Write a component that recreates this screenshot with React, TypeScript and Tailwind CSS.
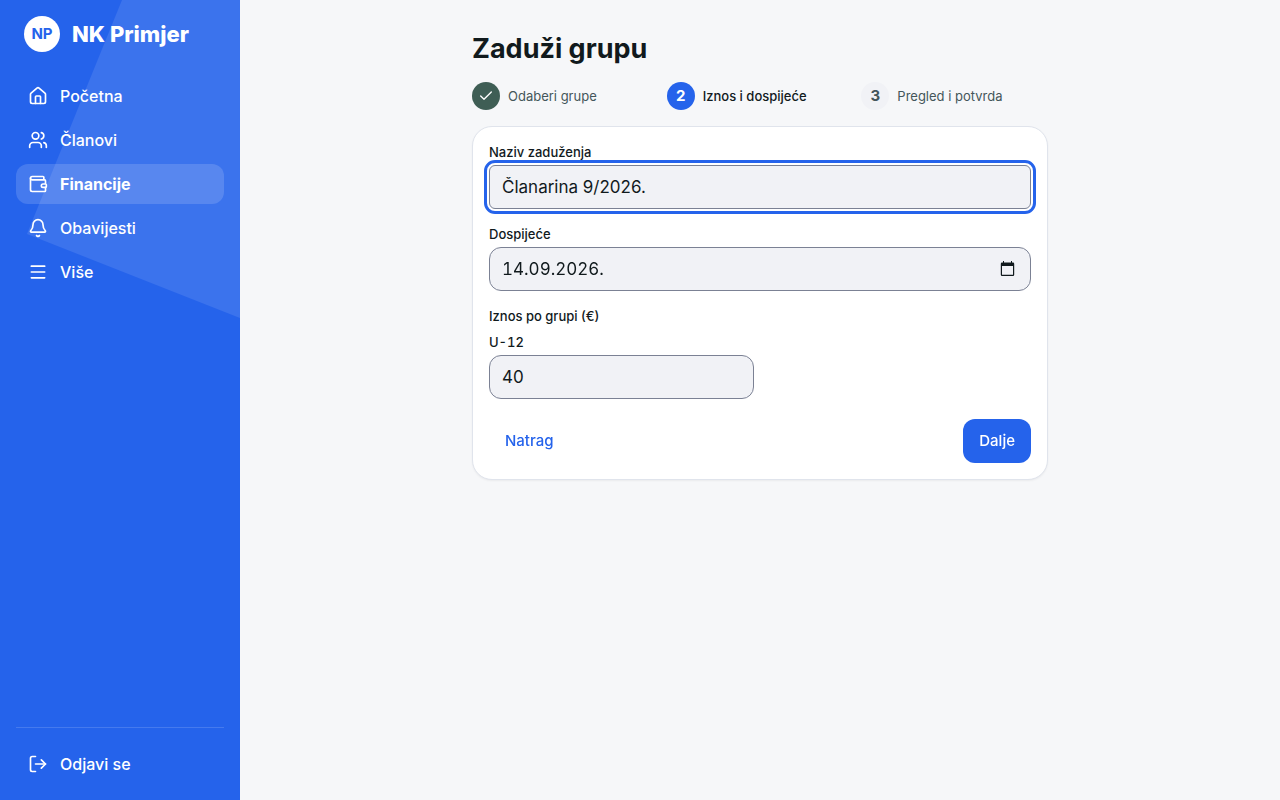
import React, { useState } from 'react'
import { Bell, Check, House, LogOut, Menu, Users, Wallet } from 'lucide-react'
import clsx from 'clsx'

const NAV = [
  { label: 'Početna', icon: House },
  { label: 'Članovi', icon: Users },
  { label: 'Financije', icon: Wallet },
  { label: 'Obavijesti', icon: Bell },
  { label: 'Više', icon: Menu },
]

const STEPS = ['Odaberi grupe', 'Iznos i dospijeće', 'Pregled i potvrda']
const CURRENT_STEP = 1

const inputClass =
  'block h-11 w-full rounded-xl border border-[#7b8194] bg-[#f1f2f6] px-3 text-[17px] text-[#111a1d] focus:rounded-md focus:outline-3 focus:outline-offset-2 focus:outline-[#2563eb]'
const labelClass = 'block text-[13px] leading-[18px] font-medium'

function Sidebar() {
  const [active, setActive] = useState('Financije')

  return (
    <aside className="relative flex w-60 shrink-0 flex-col overflow-hidden bg-[#2563eb] p-4 text-white">
      <div
        aria-hidden="true"
        className="absolute top-0 right-0 h-[318px] w-[213px] bg-white/10 [clip-path:polygon(95px_0,100%_0,100%_100%,0_234px)]"
      />
      <div className="relative flex items-center gap-3 px-2">
        <span className="flex size-9 items-center justify-center rounded-full bg-white text-[15px] font-bold text-[#2563eb]">NP</span>
        <span className="text-[22px] leading-8 font-extrabold">NK Primjer</span>
      </div>
      <nav className="relative mt-6 flex flex-col gap-1">
        {NAV.map(({ label, icon: Icon }) => (
          <a
            key={label}
            href="#"
            aria-current={active === label ? 'page' : undefined}
            onClick={() => setActive(label)}
            className={clsx(
              'flex h-10 items-center gap-3 rounded-xl px-3 text-base',
              active === label ? 'bg-white/15 font-bold' : 'font-medium',
            )}
          >
            <Icon size={20} />
            {label}
          </a>
        ))}
      </nav>
      <div className="relative mt-auto border-t border-white/15 pt-4">
        <button type="button" className="flex h-10 w-full items-center gap-3 rounded-xl px-3 text-base font-medium">
          <LogOut size={20} />
          Odjavi se
        </button>
      </div>
    </aside>
  )
}

function Stepper() {
  return (
    <ol className="mt-4 grid grid-cols-3 gap-2">
      {STEPS.map((step, i) => (
        <li key={step} className="flex items-center gap-2" aria-current={i === CURRENT_STEP ? 'step' : undefined}>
          <span
            className={clsx(
              'flex size-7 shrink-0 items-center justify-center rounded-full text-[15px] font-bold',
              i < CURRENT_STEP && 'bg-[#3f5e55] text-white',
              i === CURRENT_STEP && 'bg-[#2563eb] text-white',
              i > CURRENT_STEP && 'bg-[#f1f2f6] text-[#44565a]',
            )}
          >
            {i < CURRENT_STEP ? <Check size={16} /> : i + 1}
          </span>
          <span className={clsx('text-[13px] leading-[18px]', i === CURRENT_STEP ? 'font-medium' : 'text-[#44565a]')}>{step}</span>
        </li>
      ))}
    </ol>
  )
}

export default function App() {
  const [name, setName] = useState('Članarina 9/2026.')
  const [dueDate, setDueDate] = useState('14.09.2026.')
  const [amount, setAmount] = useState('40')

  return (
    <div className="flex min-h-screen bg-[#f6f7f9] font-['Inter',sans-serif] text-[#111a1d]">
      <Sidebar />
      <main className="min-w-0 flex-1 py-8">
        <div className="mx-auto max-w-xl">
          <h1 className="text-[27px] leading-[34px] font-bold">Zaduži grupu</h1>
          <Stepper />
          <form
            onSubmit={(e) => e.preventDefault()}
            className="mt-4 rounded-[20px] border border-[#e0e4ec] bg-white p-4 shadow-xs"
          >
            <div className="space-y-4">
              <div className="space-y-1">
                <label htmlFor="name" className={labelClass}>Naziv zaduženja</label>
                <input
                  id="name"
                  autoFocus
                  value={name}
                  onChange={(e) => setName(e.target.value)}
                  className={inputClass}
                />
              </div>
              <div className="space-y-1">
                <label htmlFor="due" className={labelClass}>Dospijeće</label>
                <div className="relative">
                  <input
                    id="due"
                    inputMode="numeric"
                    value={dueDate}
                    onChange={(e) => setDueDate(e.target.value)}
                    className={clsx(inputClass, 'tabular-nums')}
                  />
                  <button type="button" aria-label="Otvori kalendar" className="absolute inset-y-0 right-4 flex items-center">
                    <svg width="15" height="17" viewBox="0 0 15 17" fill="currentColor" aria-hidden="true">
                      <path d="M3 0h1v1.500h7V0h1v1.500h1A1.200 1.200 0 0 1 14.200 2.700v11.100A1.200 1.200 0 0 1 13 15H2a1.200 1.200 0 0 1-1.200-1.200V2.700A1.200 1.200 0 0 1 2 1.500h1zM2 5v8.800h11V5z" />
                    </svg>
                  </button>
                </div>
              </div>
              <fieldset>
                <legend className={labelClass}>Iznos po grupi (€)</legend>
                <div className="mt-2 grid grid-cols-2 gap-3">
                  <div className="space-y-1">
                    <label htmlFor="amount-u12" className={clsx(labelClass, 'tabular-nums')}>U-12</label>
                    <input
                      id="amount-u12"
                      inputMode="decimal"
                      value={amount}
                      onChange={(e) => setAmount(e.target.value)}
                      className={inputClass}
                    />
                  </div>
                </div>
              </fieldset>
            </div>
            <div className="mt-5 flex justify-between">
              <button type="button" className="h-11 rounded-xl px-4 text-[15px] font-medium text-[#2563eb]">
                Natrag
              </button>
              <button type="submit" className="h-11 rounded-xl bg-[#2563eb] px-4 text-[15px] font-medium text-white">
                Dalje
              </button>
            </div>
          </form>
        </div>
      </main>
    </div>
  )
}
